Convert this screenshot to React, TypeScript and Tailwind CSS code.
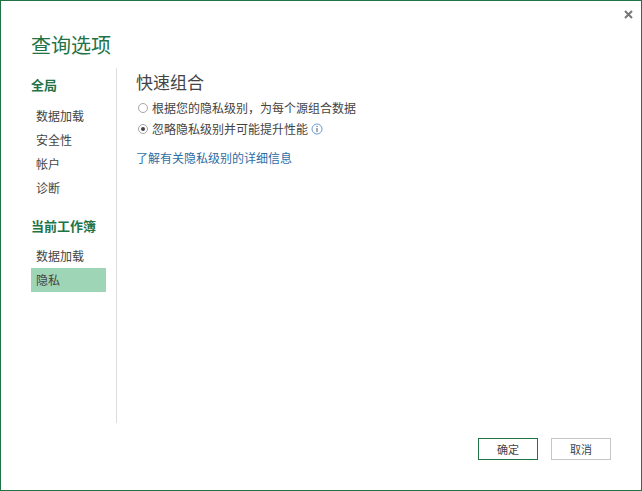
const cjk = "font-['Noto_Sans_CJK_SC','Liberation_Sans',sans-serif]";

function NavItem({ label, active }: { label: string; active?: boolean }) {
  return (
    <div className={`h-6 w-[75px] pl-[5px] text-[12px] leading-6 whitespace-nowrap text-[#444444] ${active ? "bg-[#9fd5b7]" : ""}`}>
      {label}
    </div>
  );
}

function Radio({ checked }: { checked?: boolean }) {
  return (
    <span className="ml-[2px] flex h-[10px] w-[10px] shrink-0 items-center justify-center rounded-full border border-[#a6a6a6] bg-white">
      {checked && <span className="h-1 w-1 rounded-full bg-[#444444]" />}
    </span>
  );
}

export default function App() {
  return (
    <div className={`flex h-[491px] w-[642px] flex-col border border-[#217346] bg-white ${cjk}`}>
      <div className="flex h-[26px] justify-end pt-[8px] pr-[8px]">
        <svg width="9" height="9" viewBox="0 0 9 9" className="mt-[1px]">
          <path d="M1 1 L8 8 M8 1 L1 8" stroke="#777777" strokeWidth="2" />
        </svg>
      </div>
      <div className="ml-[30px] h-[41px] text-[20px] leading-[36px] text-[#217346]">查询选项</div>
      <div className="flex h-[355px]">
        <div className="w-[115px] shrink-0 pl-[30px]">
          <div className="h-[36px] text-[13px] leading-[34px] font-bold whitespace-nowrap text-[#217346]">全局</div>
          <NavItem label="数据加载" />
          <NavItem label="安全性" />
          <NavItem label="帐户" />
          <NavItem label="诊断" />
          <div className="mt-[14px] h-[30px] text-[13px] leading-[24px] font-bold whitespace-nowrap text-[#217346]">当前工作簿</div>
          <NavItem label="数据加载" />
          <NavItem active label="隐私" />
        </div>
        <div className="w-px bg-[#dddddd]" />
        <div className="ml-[19px] flex-1">
          <div className="h-[30px] text-[17px] leading-[28px] text-[#444444]">快速组合</div>
          <div className="flex h-[20px] items-center gap-[4px] text-[12px] text-[#444444]">
            <Radio />
            <span>根据您的隐私级别，为每个源组合数据</span>
          </div>
          <div className="flex h-[21px] items-center gap-[4px] text-[12px] text-[#444444]">
            <Radio checked />
            <span>忽略隐私级别并可能提升性能</span>
            <svg width="12" height="12" viewBox="0 0 12 12" className="ml-[-1px]">
              <circle cx="6" cy="6" r="5" fill="none" stroke="#6b9bd2" />
              <path d="M6 5 V9 M6 3 V4" stroke="#44546a" />
            </svg>
          </div>
          <div className="mt-[9px] text-[12px] leading-5 whitespace-nowrap text-[#2e6da4]">了解有关隐私级别的详细信息</div>
        </div>
      </div>
      <div className="flex justify-end gap-[13px] pt-[15px] pr-[30px]">
        <button className="h-[22px] w-[60px] border border-[#217346] bg-white text-[11px] text-[#444444]">确定</button>
        <button className="h-[22px] w-[60px] border border-[#c6c6c6] bg-white text-[11px] text-[#444444]">取消</button>
      </div>
    </div>
  );
}
